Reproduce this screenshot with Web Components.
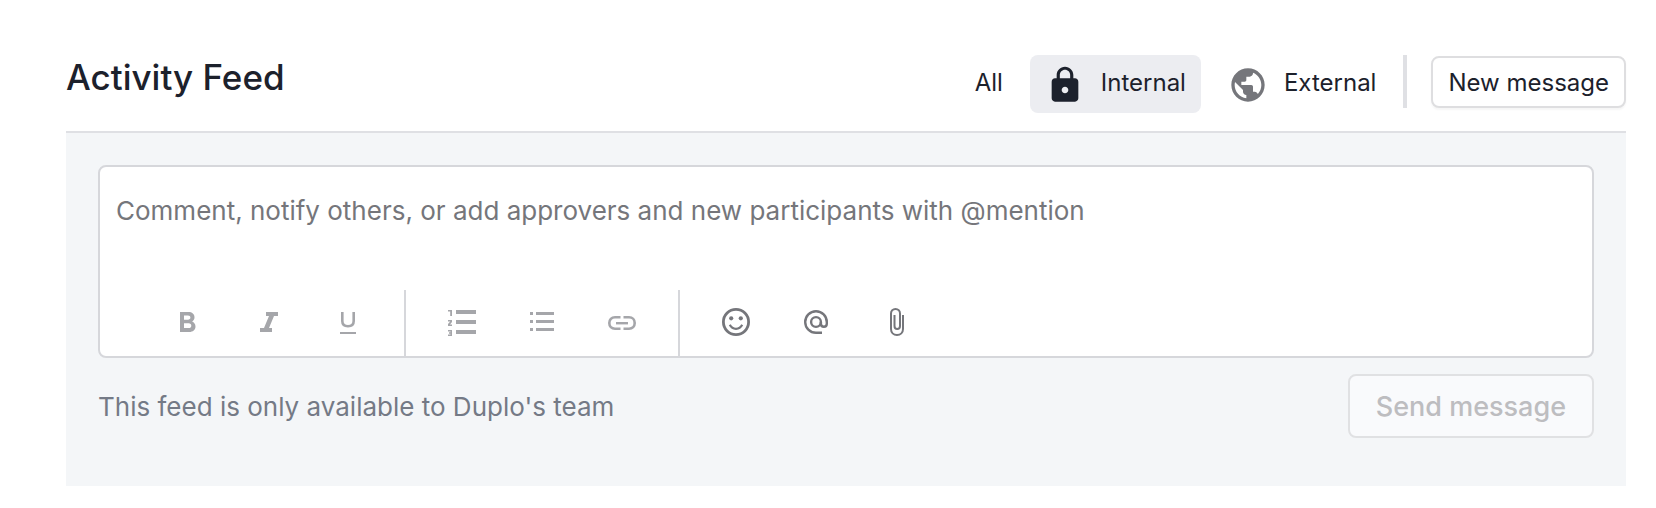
<!DOCTYPE html>
<html lang="en">
<head>
<meta charset="utf-8">
<meta name="viewport" content="width=device-width, initial-scale=1">
<title>Activity Feed</title>
<style>
body { margin: 0; background: #fff; color: #1c212c; font-family: Inter, "Liberation Sans", sans-serif; }
</style>
</head>
<body>
<activity-feed>
  <feed-header slot="header">
    <h1 slot="title">Activity Feed</h1>
    <feed-filter>All</feed-filter>
    <feed-filter icon="lock" selected>Internal</feed-filter>
    <feed-filter icon="globe">External</feed-filter>
    <feed-button slot="action">New message</feed-button>
  </feed-header>
  <comment-editor placeholder="Comment, notify others, or add approvers and new participants with @mention">
    <tool-group>
      <tool-button icon="bold" label="Bold" disabled></tool-button>
      <tool-button icon="italic" label="Italic" disabled></tool-button>
      <tool-button icon="underline" label="Underline" disabled></tool-button>
    </tool-group>
    <tool-group>
      <tool-button icon="numbered" label="Numbered list" disabled></tool-button>
      <tool-button icon="bulleted" label="Bulleted list" disabled></tool-button>
      <tool-button icon="link" label="Insert link" disabled></tool-button>
    </tool-group>
    <tool-group>
      <tool-button icon="emoji" label="Insert emoji"></tool-button>
      <tool-button icon="mention" label="Mention someone"></tool-button>
      <tool-button icon="attach" label="Attach file"></tool-button>
    </tool-group>
  </comment-editor>
  <span slot="note">This feed is only available to Duplo's team</span>
  <feed-button slot="submit" size="large" disabled>Send message</feed-button>
</activity-feed>

<script>
const ICONS = {
  lock: ['0 0 24 24', 40, '<path d="M18 8h-1V6c0-2.760-2.240-5-5-5S7 3.240 7 6v2H6c-1.100 0-2 .900-2 2v10c0 1.100.900 2 2 2h12c1.100 0 2-.900 2-2V10c0-1.100-.900-2-2-2zm-6 9c-1.100 0-2-.900-2-2s.900-2 2-2 2 .900 2 2-.900 2-2 2zm3.100-9H8.900V6c0-1.710 1.390-3.100 3.100-3.100s3.100 1.390 3.100 3.100z"/>'],
  globe: ['0 0 24 24', 40, '<path d="M12 2C6.480 2 2 6.480 2 12s4.480 10 10 10 10-4.480 10-10S17.520 2 12 2zm-1 17.930c-3.950-.490-7-3.850-7-7.930 0-.620.080-1.210.210-1.790L9 15v1c0 1.100.900 2 2 2zm6.900-2.540c-.260-.810-1-1.390-1.900-1.390h-1v-3c0-.550-.450-1-1-1H8v-2h2c.550 0 1-.450 1-1V7h2c1.100 0 2-.900 2-2v-.410c2.930 1.190 5 4.060 5 7.410 0 2.080-.800 3.970-2.100 5.390z"/>'],
  bold: ['0 0 28 28', 28, '<path fill-rule="evenodd" d="M6 4h8.500c3.500 0 6 2 6 5.200 0 2-.9 3.400-2.400 4.300 2 .8 3.400 2.600 3.400 5 0 3.400-2.600 5.500-6.200 5.500H6zm4 3.500v4.200h4c1.500 0 2.400-.8 2.400-2.100s-.9-2.100-2.400-2.100zm0 7.700v4.900h4.700c1.600 0 2.600-.9 2.600-2.400s-1-2.500-2.600-2.500z"/>'],
  italic: ['0 0 28 28', 28, '<path d="M12 4h12v4h-4l-5 12h3v4H6v-4h4l5-12h-3z"/>'],
  underline: ['0 0 28 28', 28, '<path fill="none" stroke="currentColor" stroke-width="2.600" d="M8.300 4v9c0 3.500 2.200 5.200 5.700 5.200s5.700-1.700 5.700-5.200V4"/><path d="M6 24h16v2H6z"/>'],
  numbered: ['0 0 28 28', 28, '<path d="M8 2h20v4H8zM8 12h20v4H8zM8 22h20v4H8zM0 2h4v6H2.200V3.500H0zM0 12h4v2L2 16.500h2V18H0v-2l2.200-2.500H0zM0 22h4v6H0v-1.500h2.500v-.8H1v-1.400h1.500v-.8H0z"/>'],
  bulleted: ['0 0 28 28', 28, '<path d="M2 4h3v3H2zM2 12h3v3H2zM2 20h3v3H2zM8 4h18v3H8zM8 12h18v3H8zM8 20h18v3H8z"/>'],
  link: ['0 0 28 28', 28, '<path fill="none" stroke="currentColor" stroke-width="2.600" d="M12.500 9.300H7C3.500 9.300 1.300 11.700 1.300 15s2.200 5.700 5.700 5.700h5.500M15.500 9.300H21c3.500 0 5.700 2.400 5.700 5.700s-2.200 5.700-5.700 5.700h-5.500"/><path d="M8 14h12v2.400H8z"/>'],
  emoji: ['0 0 28 28', 28, '<circle cx="14" cy="14" r="12.600" fill="none" stroke="currentColor" stroke-width="2.800"/><circle cx="9.200" cy="10.300" r="2.100"/><circle cx="18.800" cy="10.300" r="2.100"/><path fill="none" stroke="currentColor" stroke-width="2.200" d="M7.800 16.800c2.700 5.300 9.700 5.300 12.400 0"/>'],
  mention: ['0 0 28 28', 28, '<g fill="none" stroke="currentColor" stroke-width="2.400"><circle cx="14" cy="14" r="4.900"/><path d="M20 24.800h-6C8 24.800 3.200 20 3.200 14S8 3.200 14 3.200 24.800 8 24.800 14v1.800c0 1.700-1.200 3-2.900 3s-3-1.300-3-3V14"/></g>'],
  attach: ['0 0 28 28', 28, '<path fill="none" stroke="currentColor" stroke-width="2" d="M21 7v14c0 3.500-2.500 6-6 6s-6-2.500-6-6V5.500C9 2.900 10.900 1 13.500 1S18 2.900 18 5.500V18c0 1.700-1.200 2.900-2.800 2.900S12.500 19.700 12.500 18V7"/>']
};

function icon(name) {
  const entry = ICONS[name];
  if (!entry) return '';
  const [box, size, shapes] = entry;
  return `<svg viewBox="${box}" width="${size}" height="${size}" fill="currentColor" aria-hidden="true">${shapes}</svg>`;
}

class BaseElement extends HTMLElement {
  connectedCallback() {
    if (this.shadowRoot) return;
    this.attachShadow({ mode: 'open' }).innerHTML = this.render();
  }
}

customElements.define('activity-feed', class extends BaseElement {
  render() {
    return `<style>
      :host { display: block; padding: 52px 30px 22px 66px; }
      section { background: #f4f6f8; padding: 32px 32px 48px; }
      footer { display: flex; flex-wrap: wrap; align-items: center; justify-content: space-between; gap: 16px; margin-top: 16px; }
      ::slotted([slot=note]) { padding-top: 2px; color: #747a86; font-size: 26px; line-height: 32px; }
    </style>
    <slot name="header"></slot>
    <section>
      <slot></slot>
      <footer><slot name="note"></slot><slot name="submit"></slot></footer>
    </section>`;
  }
});

customElements.define('feed-header', class extends BaseElement {
  render() {
    return `<style>
      :host { display: block; border-bottom: 2px solid #dfe0e4; padding-bottom: 18px; }
      header { display: flex; flex-wrap: wrap; align-items: flex-start; justify-content: space-between; gap: 12px; }
      ::slotted(h1) { margin: 0; font-size: 35px; line-height: 50px; font-weight: 500; }
      nav, .filters { display: flex; flex-wrap: wrap; gap: 12px; }
      nav { padding-top: 3px; }
      .rule { width: 4px; height: 53px; background: #dfe0e4; }
      .action { padding: 1px 0 0 12px; }
    </style>
    <header>
      <slot name="title"></slot>
      <nav aria-label="Feed">
        <div class="filters"><slot></slot></div>
        <div class="rule"></div>
        <div class="action"><slot name="action"></slot></div>
      </nav>
    </header>`;
  }
});

customElements.define('feed-filter', class extends BaseElement {
  render() {
    const on = this.hasAttribute('selected');
    return `<style>
      :host { display: block; }
      button { display: flex; align-items: center; gap: 16px; height: 58px; padding: 0 15px; border: 0; border-radius: 8px; background: none; color: #1c212c; font: 24px/32px Inter, sans-serif; cursor: pointer; }
      button[aria-pressed=true] { background: #ecedf1; }
      span { padding-bottom: 2px; }
      svg { color: #75767b; margin-top: 2px; }
      [aria-pressed=true] svg { color: #1c212c; }
    </style>
    <button type="button" aria-pressed="${on}">${icon(this.getAttribute('icon'))}<span><slot></slot></span></button>`;
  }
});

customElements.define('feed-button', class extends BaseElement {
  render() {
    return `<style>
      :host { display: block; }
      button { display: block; height: 52px; padding: 2px 15px 0; border: 2px solid #dedee0; border-radius: 8px; background: #fff; color: #1c212c; font: 24px/32px Inter, sans-serif; box-shadow: 0 2px 2px #0000000a; cursor: pointer; }
      :host([size=large]) button { height: 64px; padding: 2px 26px 0; font-size: 27px; font-weight: 500; }
      button:disabled { background: #f9fafc; border-color: #e0e1e3; color: #bdbdc0; box-shadow: none; cursor: default; }
    </style>
    <button type="button" ${this.hasAttribute('disabled') ? 'disabled' : ''}><slot></slot></button>`;
  }
});

customElements.define('comment-editor', class extends BaseElement {
  render() {
    return `<style>
      :host { display: block; border: 2px solid #d6d7db; border-radius: 8px; background: #fff; }
      textarea { display: block; box-sizing: border-box; width: 100%; height: 123px; padding: 28px 16px 0; border: 0; outline: 0; resize: none; background: none; color: #1c212c; font: 26px/32px Inter, sans-serif; }
      textarea::placeholder { color: #75767b; opacity: 1; }
      .toolbar { display: flex; flex-wrap: wrap; padding-left: 32px; }
    </style>
    <textarea aria-label="Comment" placeholder="${this.getAttribute('placeholder')}"></textarea>
    <div class="toolbar" role="toolbar" aria-label="Formatting"><slot></slot></div>`;
  }
});

customElements.define('tool-group', class extends BaseElement {
  render() {
    return `<style>
      :host { display: flex; padding: 0 16px; border-right: 2px solid #d6d7db; }
      :host(:last-of-type) { border-right: 0; }
    </style><slot></slot>`;
  }
});

customElements.define('tool-button', class extends BaseElement {
  render() {
    return `<style>
      :host { display: block; }
      button { display: flex; align-items: center; justify-content: center; width: 80px; height: 66px; padding: 0 0 2px; border: 0; background: none; color: #75767b; cursor: pointer; }
      button:disabled { color: #a5a6aa; cursor: default; }
      svg { overflow: visible; }
    </style>
    <button type="button" aria-label="${this.getAttribute('label')}" ${this.hasAttribute('disabled') ? 'disabled' : ''}>${icon(this.getAttribute('icon'))}</button>`;
  }
});
</script>
</body>
</html>
